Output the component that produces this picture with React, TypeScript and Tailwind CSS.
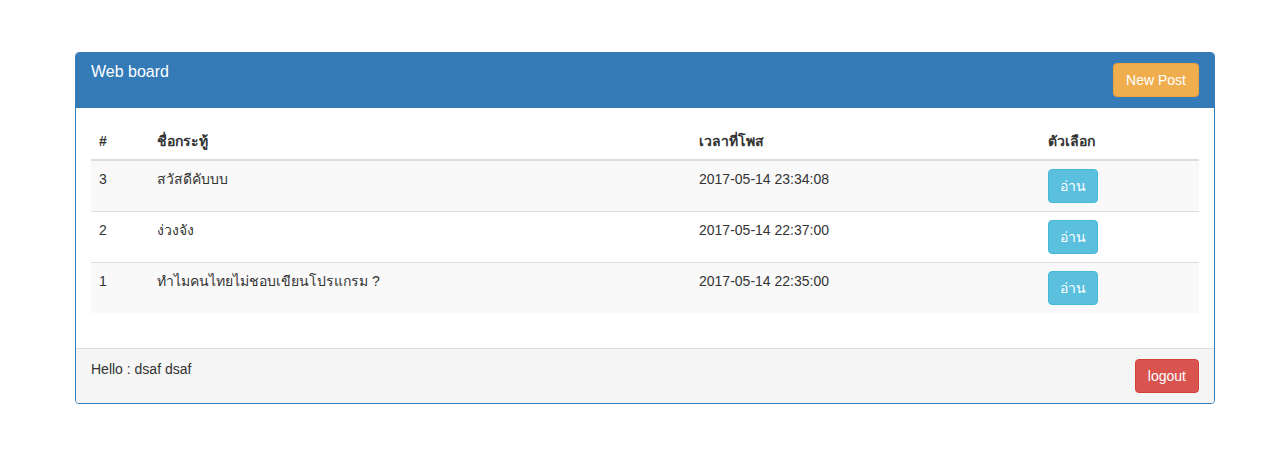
import React from "react";

const posts = [
  { id: 3, title: "สวัสดีคับบบ", time: "2017-05-14 23:34:08" },
  { id: 2, title: "ง่วงจัง", time: "2017-05-14 22:37:00" },
  { id: 1, title: "ทำไมคนไทยไม่ชอบเขียนโปรแกรม ?", time: "2017-05-14 22:35:00" },
];

export default function App() {
  return (
    <div className="min-h-[462px] bg-white pt-[52px] text-[14px] leading-[20px] text-[#333] font-['Liberation_Sans',Arial,'Tahoma',sans-serif]">
      <div className="ml-[75px] w-[1140px] rounded-[4px] border border-[#337ab7] bg-white overflow-hidden">
        {/* heading */}
        <div className="flex items-start justify-between bg-[#337ab7] px-[15px] py-[10px] border-b border-[#337ab7]">
          <h3 className="text-[16px] leading-[18px] text-white">Web board</h3>
          <button className="h-[34px] rounded-[4px] border border-[#eea236] bg-[#f0ad4e] px-[12px] text-[14px] text-white">
            New Post
          </button>
        </div>

        {/* body */}
        <div className="p-[15px]">
          <table className="mb-[20px] w-full border-collapse">
            <thead>
              <tr className="border-b-2 border-[#ddd] text-left font-bold">
                <th className="w-[58px] p-[8px] align-bottom">#</th>
                <th className="w-[542px] p-[8px] align-bottom">ชื่อกระทู้</th>
                <th className="w-[349px] p-[8px] align-bottom">เวลาที่โพส</th>
                <th className="p-[8px] align-bottom">ตัวเลือก</th>
              </tr>
            </thead>
            <tbody>
              {posts.map((p, i) => (
                <tr
                  key={p.id}
                  className={`border-t border-[#ddd] first:border-t-0 ${i % 2 === 0 ? "bg-[#f9f9f9]" : "bg-white"}`}
                >
                  <td className="p-[8px] align-top">{p.id}</td>
                  <td className="p-[8px] align-top">{p.title}</td>
                  <td className="p-[8px] align-top">{p.time}</td>
                  <td className="p-[8px] align-top">
                    <button className="h-[34px] w-[50px] rounded-[4px] border border-[#46b8da] bg-[#5bc0de] text-[14px] text-white">
                      อ่าน
                    </button>
                  </td>
                </tr>
              ))}
            </tbody>
          </table>
        </div>

        {/* footer */}
        <div className="flex items-start justify-between border-t border-[#ddd] bg-[#f5f5f5] px-[15px] py-[10px]">
          <span>Hello : dsaf dsaf</span>
          <button className="h-[34px] rounded-[4px] border border-[#d43f3a] bg-[#d9534f] px-[12px] text-[14px] text-white">
            logout
          </button>
        </div>
      </div>
    </div>
  );
}
